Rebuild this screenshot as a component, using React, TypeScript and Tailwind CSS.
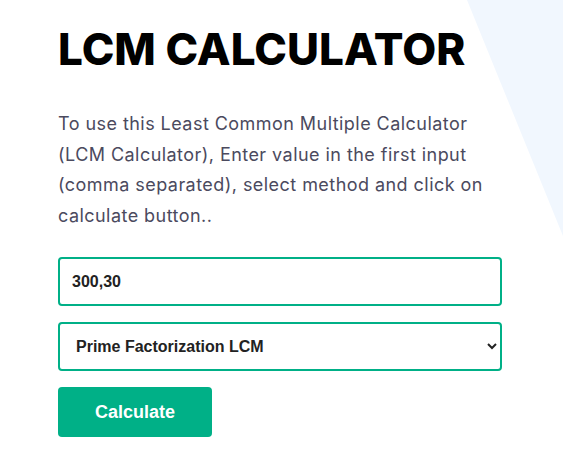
import { useState } from "react";

const App = () => {
  const [value, setValue] = useState("300,30");
  const [method, setMethod] = useState("prime");

  return (
    <div className="relative min-h-screen w-full overflow-hidden bg-white">
      {/* light blue wedge in the top right corner */}
      <svg
        className="absolute right-0 top-0 h-[463px] w-[563px]"
        viewBox="0 0 563 463"
        preserveAspectRatio="none"
      >
        <polygon points="467,0 563,0 563,236" fill="#f1f7fe" />
      </svg>

      <div className="relative w-[444px] ml-[58px] pt-[22px]">
        <h1 className="text-[44px] leading-[54px] font-extrabold text-black font-['Inter',sans-serif]">
          LCM CALCULATOR
        </h1>

        <p className="mt-[33px] text-[18px] leading-[30.5px] tracking-[0.45px] text-[#4b4a5e] font-['Inter',sans-serif]">
          To use this Least Common Multiple Calculator
          <br />
          (LCM Calculator), Enter value in the first input
          <br />
          (comma separated), select method and click on
          <br />
          calculate button..
        </p>

        <form
          className="mt-[26px] flex flex-col"
          onSubmit={(e) => e.preventDefault()}
        >
          <input
            value={value}
            onChange={(e) => setValue(e.target.value)}
            className="h-[49px] w-full rounded-[4px] border-2 border-[#00b087] px-[12px] text-[16px] font-bold text-[#222] outline-none font-['Liberation_Sans',Arial,sans-serif]"
          />

          <select
            value={method}
            onChange={(e) => setMethod(e.target.value)}
            className="mt-[16px] h-[49px] w-full rounded-[4px] border-2 border-[#00b087] bg-white pl-[12px] pr-[8px] text-[16px] font-bold text-[#222] outline-none font-['Liberation_Sans',Arial,sans-serif]"
          >
            <option value="prime">Prime Factorization LCM</option>
            <option value="division">Division Method LCM</option>
            <option value="listing">Listing Multiples LCM</option>
          </select>

          <button
            type="submit"
            className="mt-[16px] h-[50px] w-[154px] rounded-[4px] bg-[#00b087] text-[18px] font-bold text-white font-['Liberation_Sans',Arial,sans-serif]"
          >
            Calculate
          </button>
        </form>
      </div>
    </div>
  );
};

export default App;
